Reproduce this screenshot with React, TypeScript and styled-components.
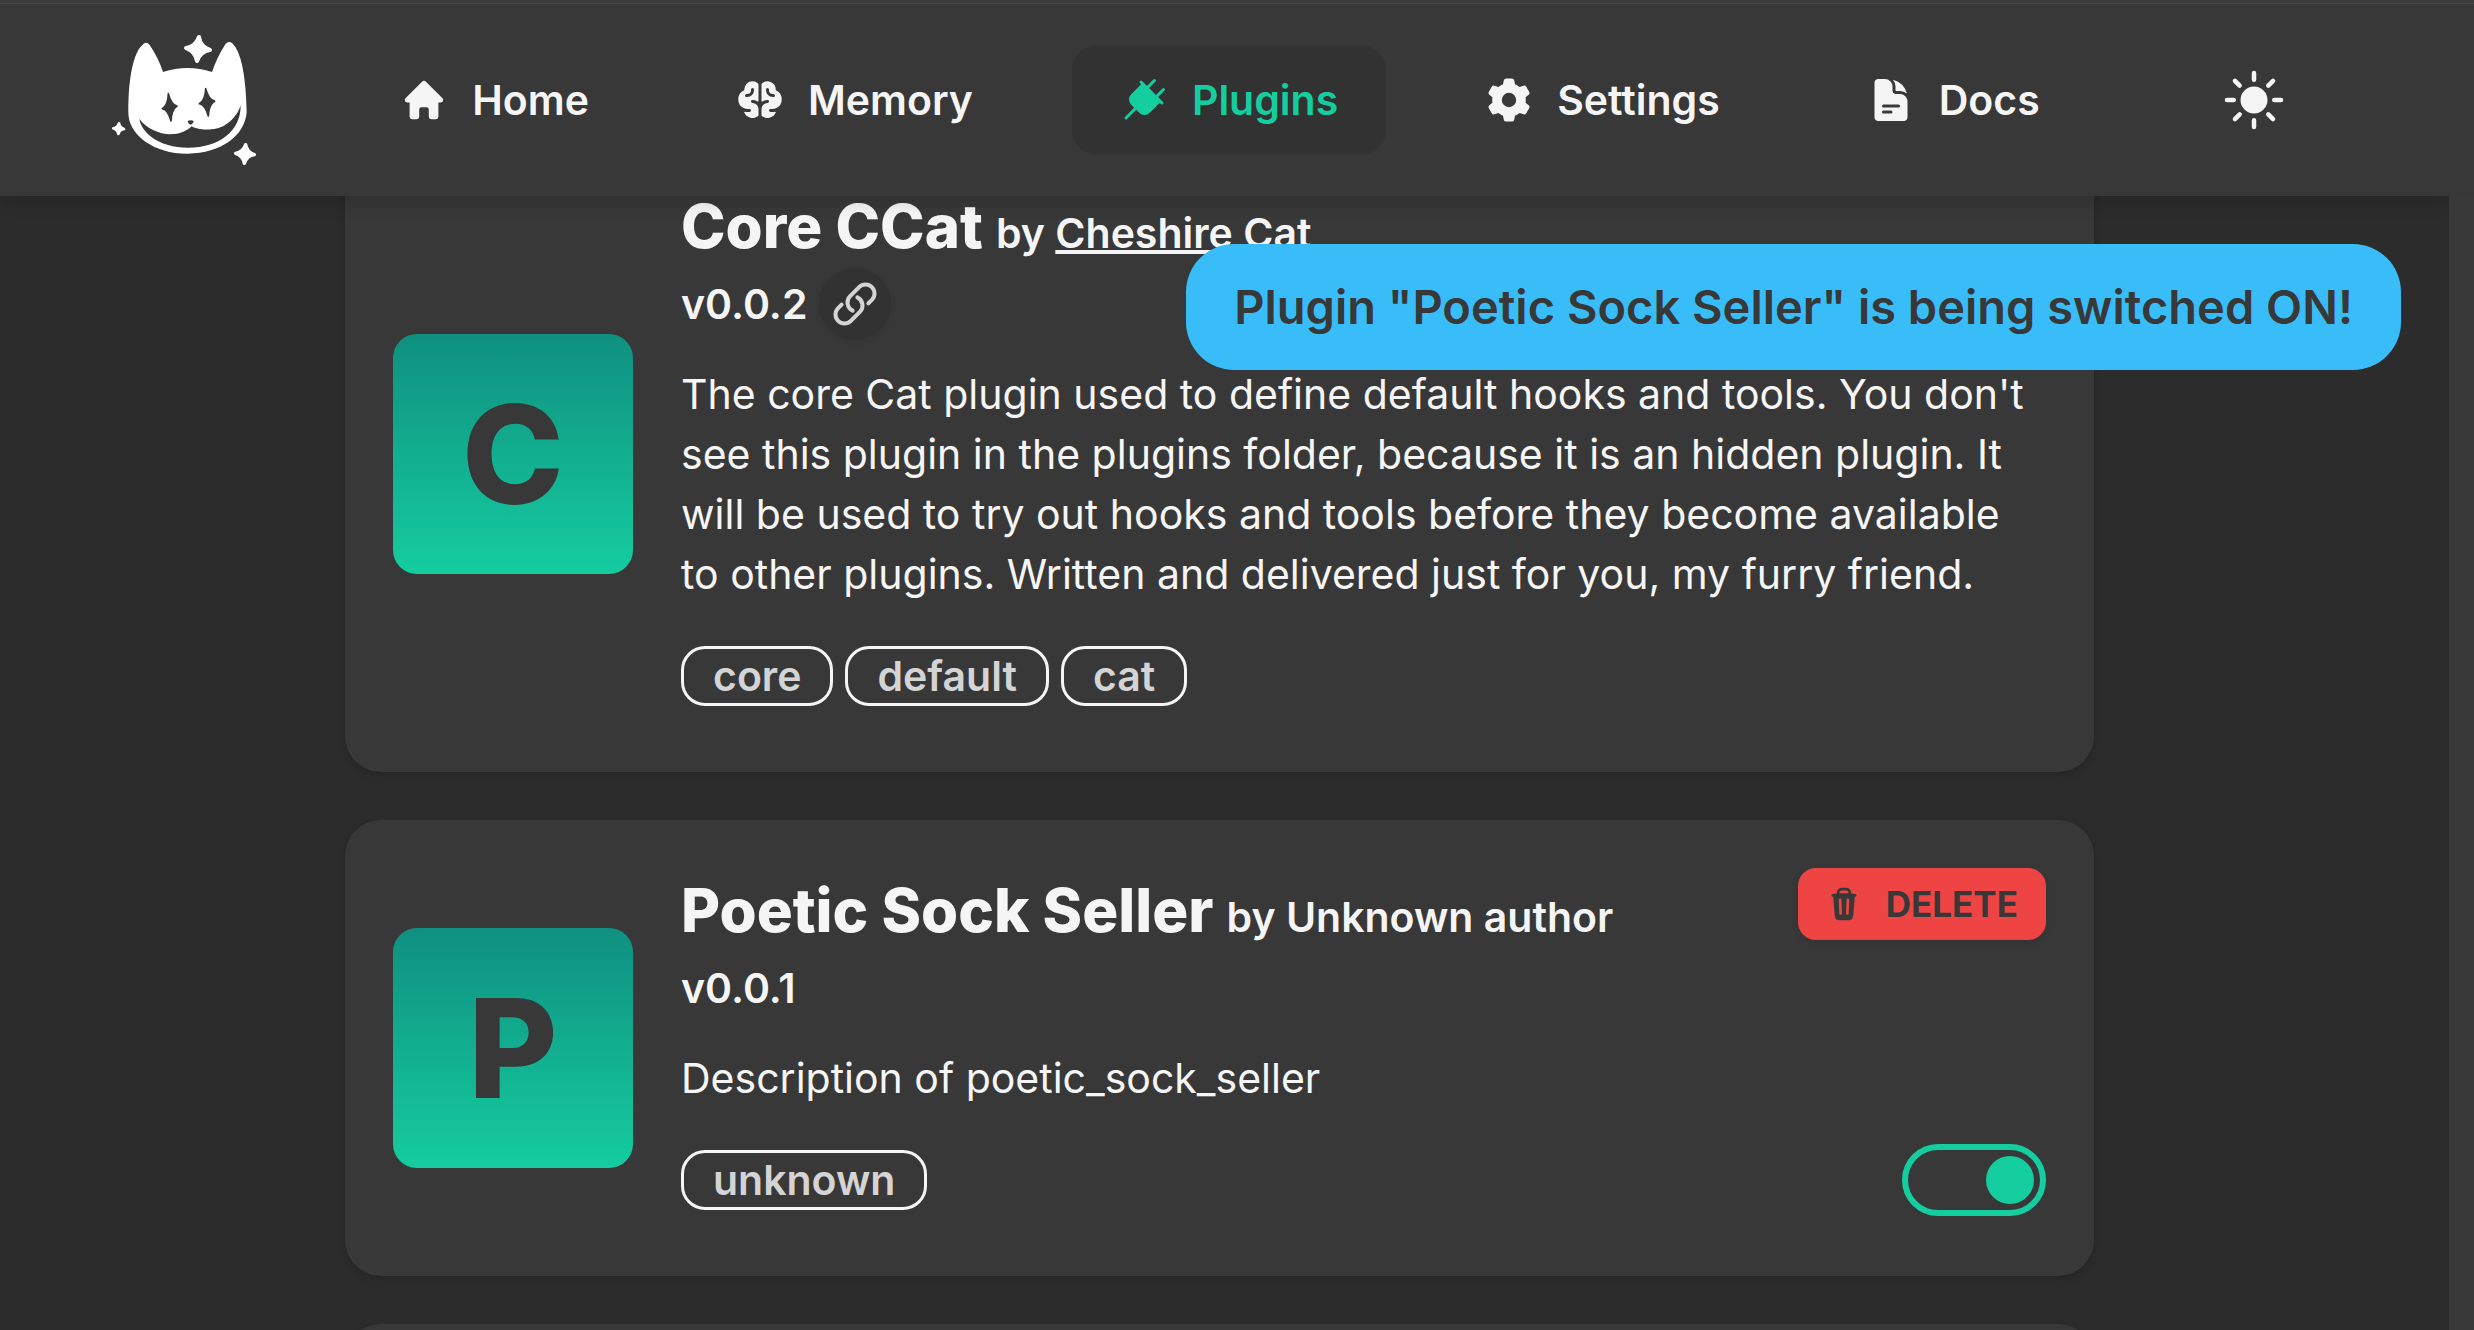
import React, { useState } from 'react';
import styled, { createGlobalStyle, css } from 'styled-components';
import type { IconType } from 'react-icons';
import {
  HiMiniHome,
  HiMiniCog6Tooth,
  HiMiniTrash,
  HiDocumentText,
  HiSun,
  HiOutlineLink,
} from 'react-icons/hi2';
import { PiPlugFill, PiBrainFill } from 'react-icons/pi';

const C = {
  page: '#2c2c2c',
  surface: '#383838',
  sunken: '#323232',
  text: '#f5f5f5',
  dim: '#d4d4d4',
  accent: '#15ce9f',
  danger: '#ef4444',
  info: '#38bdf8',
};

const GlobalStyle = createGlobalStyle`
  *, *::before, *::after { box-sizing: border-box; }
  body {
    margin: 0;
    background: ${C.page};
    color: ${C.text};
    font-family: Inter, "Liberation Sans", sans-serif;
    font-size: 41px;
    line-height: 60px;
  }
  h2, p, ul { margin: 0; padding: 0; }
  button { border: 0; font: inherit; cursor: pointer; }
`;

const Page = styled.div`
  display: grid;
  grid-template-rows: auto 1fr;
  height: 100vh;
  overflow: hidden;
`;

const Header = styled.header`
  position: relative;
  z-index: 2;
  border-top: 3px solid #3c3c3c;
  background: ${C.surface};
`;

const HeaderBar = styled.div`
  display: flex;
  align-items: center;
  justify-content: space-between;
  height: 193px;
  padding: 0 146px 0 112px;
  border-top: 1px solid #474747;
`;

const LogoLink = styled.a`
  display: flex;
  width: 148px;
  height: 144px;
  svg { width: 100%; height: 100%; }
`;

const Nav = styled.nav`
  display: flex;
  gap: 51px;
`;

const NavLink = styled.a<{ $active?: boolean }>`
  display: flex;
  align-items: center;
  gap: 24px;
  height: 108px;
  padding: 0 48px;
  border-radius: 24px;
  color: ${C.text};
  font-weight: 600;
  text-decoration: none;
  svg { width: 48px; height: 48px; }
  ${(p) =>
    p.$active &&
    css`
      background: ${C.sunken};
      color: ${C.accent};
    `}
`;

const ThemeButton = styled.button`
  display: grid;
  place-items: center;
  width: 148px;
  height: 108px;
  padding: 0;
  background: none;
  color: ${C.text};
  svg { width: 72px; height: 72px; }
`;

const Body = styled.div`
  display: grid;
  grid-template-columns: 1fr 25px;
  min-height: 0;
`;

const ScrollTrack = styled.div`
  background: #393939;
`;

const Main = styled.main`
  position: relative;
  overflow: hidden;
  padding-right: 10px;
  &::before {
    content: '';
    position: absolute;
    inset: -12px 0 auto;
    z-index: 1;
    height: 12px;
    box-shadow: 0 3px 18px rgba(0, 0, 0, 0.25);
  }
`;

const PluginList = styled.ul`
  display: grid;
  gap: 48px;
  max-width: 1749px;
  margin: -60px auto 0;
  list-style: none;
`;

const Card = styled.li`
  display: grid;
  grid-template-columns: 240px 1fr;
  align-items: center;
  gap: 48px;
  min-height: 456px;
  padding: 48px;
  border-radius: 36px;
  background: ${C.surface};
  box-shadow: 0 3px 9px rgba(0, 0, 0, 0.18);
`;

const Avatar = styled.div`
  display: grid;
  place-items: center;
  height: 240px;
  border-radius: 24px;
  background: linear-gradient(#0f9080, #15cc9f);
  color: ${C.surface};
  font-size: 137px;
  font-weight: 800;
  line-height: 144px;
`;

const Details = styled.div`
  display: grid;
  min-width: 0;
`;

const Row = styled.div`
  display: flex;
  align-items: flex-start;
  justify-content: space-between;
  height: 84px;
`;

const Title = styled.h2`
  font-size: 60px;
  font-weight: 800;
  line-height: 84px;
`;

const Author = styled.span`
  font-size: 41px;
  font-weight: 600;
  a { color: inherit; text-decoration-thickness: 4px; }
`;

const Version = styled.p`
  display: flex;
  align-items: center;
  gap: 12px;
  height: 72px;
  font-weight: 600;
`;

const LinkButton = styled.a`
  display: grid;
  place-items: center;
  width: 72px;
  height: 72px;
  border-radius: 50%;
  background: ${C.sunken};
  color: ${C.dim};
  box-shadow: 0 3px 6px rgba(0, 0, 0, 0.05);
  svg { width: 48px; height: 48px; stroke-width: 2; }
`;

const Description = styled.p`
  margin: 24px 0;
`;

const Footer = styled.div`
  display: flex;
  align-items: center;
  justify-content: space-between;
  height: 96px;
`;

const Tags = styled.div`
  display: flex;
  gap: 12px;
`;

const Tag = styled.span`
  height: 60px;
  padding: 0 29px;
  border: 3px solid ${C.text};
  border-radius: 24px;
  color: ${C.dim};
  font-weight: 600;
  line-height: 54px;
`;

const DeleteButton = styled.button`
  display: flex;
  align-items: center;
  gap: 24px;
  height: 72px;
  padding: 0 28px;
  border-radius: 18px;
  background: ${C.danger};
  color: ${C.surface};
  box-shadow: 0 3px 6px rgba(0, 0, 0, 0.1);
  font-size: 35px;
  font-weight: 700;
  svg { width: 36px; height: 36px; }
`;

const Toggle = styled.input`
  display: flex;
  align-items: center;
  appearance: none;
  width: 144px;
  height: 72px;
  margin: 0;
  padding: 0 6px;
  border: 6px solid ${C.dim};
  border-radius: 36px;
  cursor: pointer;
  &::before {
    content: '';
    width: 48px;
    height: 48px;
    border-radius: 50%;
    background: ${C.dim};
  }
  &:checked {
    justify-content: flex-end;
    border-color: ${C.accent};
  }
  &:checked::before { background: ${C.accent}; }
`;

const Toast = styled.div`
  position: fixed;
  z-index: 3;
  top: 244px;
  right: 73px;
  padding: 33px 48px;
  border-radius: 48px;
  background: ${C.info};
  color: ${C.surface};
  font-size: 47px;
  font-weight: 600;
`;

interface StarProps {
  x: number;
  y: number;
  rx: number;
  ry: number;
  lean: number;
  color: string;
  edge: number;
}

/* Four-pointed sparkle with concave sides and softened tips. */
function Star({ x, y, rx, ry, lean, color, edge }: StarProps) {
  const kx = rx * 0.22;
  const ky = ry * 0.18;
  const d = `M${x + lean} ${y - ry} Q${x + kx} ${y - ky} ${x + rx} ${y + lean}
    Q${x + kx} ${y + ky} ${x - lean} ${y + ry} Q${x - kx} ${y + ky} ${x - rx} ${y - lean}
    Q${x - kx} ${y - ky} ${x + lean} ${y - ry}Z`;
  return <path d={d} fill={color} stroke={color} strokeWidth={edge} strokeLinejoin="round" />;
}

function CatLogo() {
  return (
    <svg viewBox="21 9 444 432" aria-hidden="true">
      <path
        fill="#fff"
        d="M116 56Q125 49 134 60Q160 98 174 141Q247 117 321 141Q336 96 362 56Q371 46 382 55Q421 92 425 262C420 330 350 386 247 386C145 386 78 330 71 275C68 230 72 88 116 56Z"
      />
      <path
        fill={C.surface}
        d="M103 281C120 308 165 328 195 328C225 328 245 318 260 304C275 315 330 320 360 300C385 285 402 260 407 240C408 320 340 368 250 368C160 368 108 320 103 281Z"
      />
      <path fill={C.surface} d="M248 288Q258 283 266 288Q265 297 258 299Q249 297 248 288Z" />
      <Star x={194} y={247} rx={22} ry={41} lean={-4} color={C.surface} edge={5} />
      <Star x={306} y={232} rx={23} ry={41} lean={-4} color={C.surface} edge={5} />
      <Star x={279} y={72} rx={36} ry={36} lean={3} color="#fff" edge={12} />
      <Star x={41} y={311} rx={16} ry={16} lean={1} color="#fff" edge={8} />
      <Star x={420} y={387} rx={28} ry={28} lean={2} color="#fff" edge={10} />
    </svg>
  );
}

const navItems: { label: string; icon: IconType; active?: boolean }[] = [
  { label: 'Home', icon: HiMiniHome },
  { label: 'Memory', icon: PiBrainFill },
  { label: 'Plugins', icon: PiPlugFill, active: true },
  { label: 'Settings', icon: HiMiniCog6Tooth },
  { label: 'Docs', icon: HiDocumentText },
];

export default function App() {
  const [enabled, setEnabled] = useState(true);
  return (
    <Page>
      <GlobalStyle />
      <Header>
        <HeaderBar>
          <LogoLink href="#home" aria-label="Cheshire Cat">
            <CatLogo />
          </LogoLink>
          <Nav>
            {navItems.map(({ label, icon: Icon, active }) => (
              <NavLink key={label} href={`#${label.toLowerCase()}`} $active={active}>
                <Icon />
                {label}
              </NavLink>
            ))}
          </Nav>
          <ThemeButton type="button" aria-label="Toggle theme">
            <HiSun />
          </ThemeButton>
        </HeaderBar>
      </Header>
      <Body>
        <Main>
          <PluginList>
            <Card>
              <Avatar>C</Avatar>
              <Details>
                <Row>
                  <Title>
                    Core CCat{' '}
                    <Author>
                      by <a href="#author">Cheshire Cat</a>
                    </Author>
                  </Title>
                </Row>
                <Version>
                  v0.0.2
                  <LinkButton href="#plugin" aria-label="Plugin page">
                    <HiOutlineLink />
                  </LinkButton>
                </Version>
                <Description>
                  The core Cat plugin used to define default hooks and tools. You don't see this
                  plugin in the plugins folder, because it is an hidden plugin. It will be used to
                  try out hooks and tools before they become available to other plugins. Written and
                  delivered just for you, my furry friend.
                </Description>
                <Footer>
                  <Tags>
                    <Tag>core</Tag>
                    <Tag>default</Tag>
                    <Tag>cat</Tag>
                  </Tags>
                </Footer>
              </Details>
            </Card>
            <Card>
              <Avatar>P</Avatar>
              <Details>
                <Row>
                  <Title>
                    Poetic Sock Seller <Author>by Unknown author</Author>
                  </Title>
                  <DeleteButton type="button">
                    <HiMiniTrash />
                    DELETE
                  </DeleteButton>
                </Row>
                <Version>v0.0.1</Version>
                <Description>Description of poetic_sock_seller</Description>
                <Footer>
                  <Tags>
                    <Tag>unknown</Tag>
                  </Tags>
                  <Toggle
                    type="checkbox"
                    aria-label="Enable Poetic Sock Seller"
                    checked={enabled}
                    onChange={(e) => setEnabled(e.target.checked)}
                  />
                </Footer>
              </Details>
            </Card>
            <Card />
          </PluginList>
        </Main>
        <ScrollTrack />
      </Body>
      <Toast role="status">Plugin "Poetic Sock Seller" is being switched ON!</Toast>
    </Page>
  );
}
